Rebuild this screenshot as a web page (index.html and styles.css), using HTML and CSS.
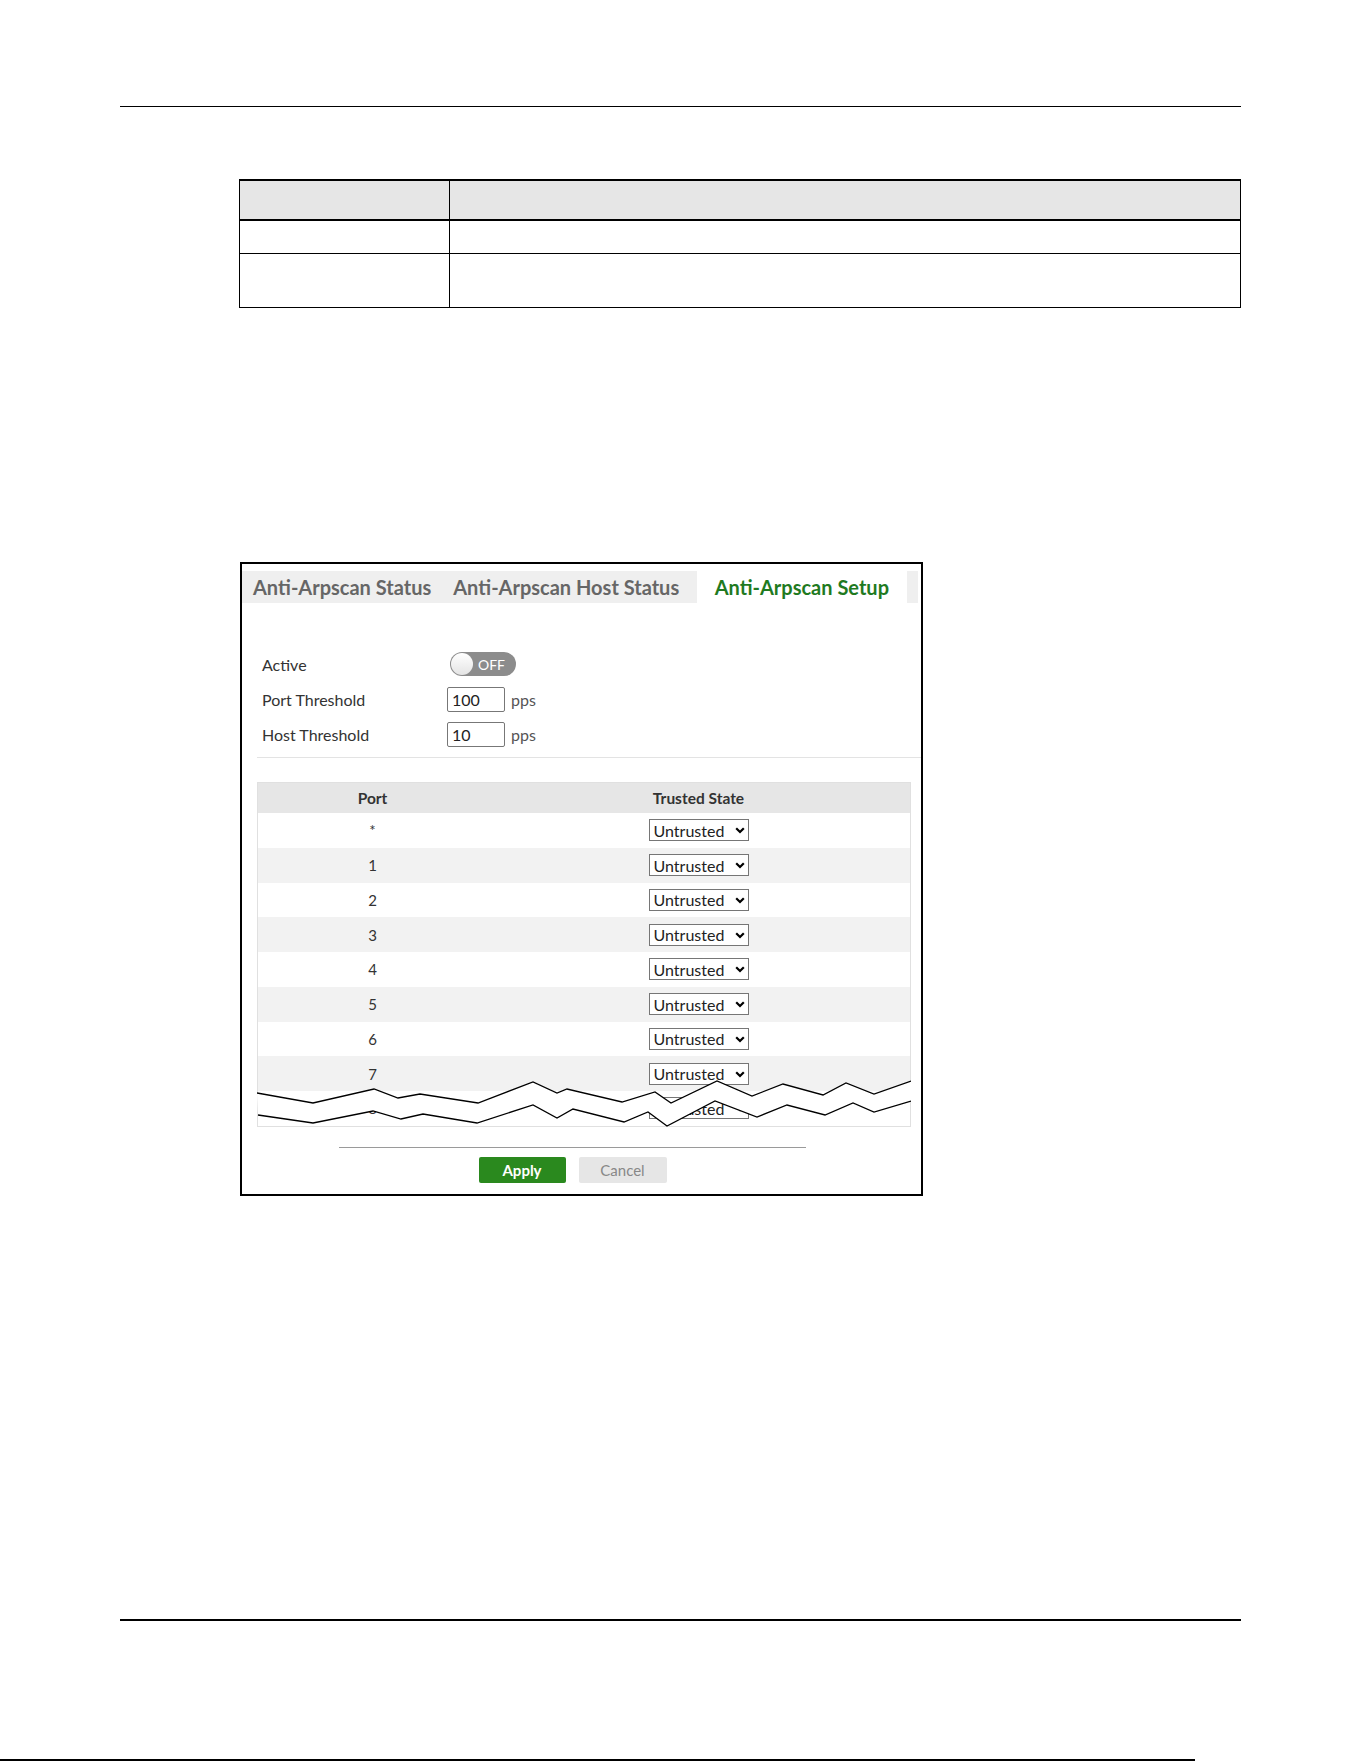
FILE: index.html
```html
<!DOCTYPE html>
<html lang="en">
<head>
  <meta charset="UTF-8">
  <title>Anti-Arpscan Setup</title>
  <link rel="stylesheet" href="styles.css">
</head>
<body>
  <div class="pagina">
    <div class="regua regua-topo"></div>

    <table class="tabela-doc">
      <thead>
        <tr><th class="col-rotulo"></th><th></th></tr>
      </thead>
      <tbody>
        <tr class="linha-curta"><td></td><td></td></tr>
        <tr class="linha-alta"><td></td><td></td></tr>
      </tbody>
    </table>

    <div class="tela">
      <div class="abas">
        <div class="aba">Anti-Arpscan Status</div>
        <div class="aba">Anti-Arpscan Host Status</div>
        <div class="aba ativa">Anti-Arpscan Setup</div>
      </div>

      <div class="ajustes">
        <div class="campo">
          <label>Active</label>
          <div class="chave"><span class="bolinha"></span><span class="chave-txt">OFF</span></div>
        </div>
        <div class="campo">
          <label for="porta-limite">Port Threshold</label>
          <input type="text" id="porta-limite" value="100">
          <span class="unidade">pps</span>
        </div>
        <div class="campo">
          <label for="host-limite">Host Threshold</label>
          <input type="text" id="host-limite" value="10">
          <span class="unidade">pps</span>
        </div>
      </div>

      <div class="divisor"></div>

      <table class="portas">
        <thead>
          <tr><th class="col-porta">Port</th><th>Trusted State</th></tr>
        </thead>
        <tbody id="lista-portas"></tbody>
      </table>

      <!-- corte da lista -->
      <svg class="corte" width="654" height="55" viewBox="0 0 654 55">
        <polygon fill="#fff" points="0,18 56,28 117,14 141,23 163,19 221,28 276,7 300,18 310,14 365,27 398,17 414,28 460,6 495,21 526,9 566,20 589,8 617,19 654,6 654,26 617,37 596,28 568,40 530,30 500,42 458,26 410,51 391,37 367,47 316,34 300,43 276,30 220,48 166,39 144,44 116,36 56,48 1,40"/>
        <polyline fill="none" stroke="#000" stroke-width="1.3" points="0,18 56,28 117,14 141,23 163,19 221,28 276,7 300,18 310,14 365,27 398,17 414,28 460,6 495,21 526,9 566,20 589,8 617,19 654,6"/>
        <polyline fill="none" stroke="#000" stroke-width="1.3" points="1,40 56,48 116,36 144,44 166,39 220,48 276,30 300,43 316,34 367,47 391,37 410,51 458,26 500,42 530,30 568,40 596,28 617,37 654,26"/>
      </svg>

      <div class="linha-botoes"></div>
      <div class="botoes">
        <button class="botao aplicar">Apply</button>
        <button class="botao cancelar">Cancel</button>
      </div>
    </div>

    <div class="regua regua-base"></div>
  </div>
  <div class="borda-final"></div>

  <script>
    const portas = ["*", "1", "2", "3", "4", "5", "6", "7", "8"];
    const corpo = document.getElementById("lista-portas");

    portas.forEach(function (p) {
      const tr = document.createElement("tr");
      tr.innerHTML =
        '<td>' + p + '</td>' +
        '<td><span class="caixa-sel">' +
        '<select><option>Untrusted</option><option>Trusted</option></select>' +
        '<svg class="seta" width="10" height="7" viewBox="0 0 10 7"><path d="M1.2 1.2 L5 5 L8.8 1.2" fill="none" stroke="#000" stroke-width="2.2"/></svg>' +
        '</span></td>';
      corpo.appendChild(tr);
    });
  </script>
</body>
</html>
```

FILE: styles.css
```css
body {
  margin: 0;
  background: #fff;
  font-family: 'Liberation Sans', Arial, sans-serif;
}

.pagina {
  width: 1121px;
  margin-left: 120px;
  padding-top: 106px;
}

.regua-topo {
  border-top: 1px solid #000;
}

.regua-base {
  margin-top: 423px;
  border-top: 2px solid #000;
}

.borda-final {
  margin-top: 138px;
  width: 1195px;
  height: 2px;
  background: #000;
}

/* tabela do manual */
.tabela-doc {
  margin-top: 72px;
  margin-left: 119px;
  width: 1002px;
  border-collapse: separate;
  border-spacing: 0;
  border-right: 1px solid #000;
  border-bottom: 1px solid #000;
}

.tabela-doc th,
.tabela-doc td {
  padding: 0;
  border-left: 1px solid #000;
  border-top: 1px solid #000;
  box-sizing: border-box;
}

.tabela-doc th {
  background: #e6e6e6;
  border-top-width: 2px;
  height: 40px;
}

.tabela-doc .col-rotulo {
  width: 210px;
}

.tabela-doc .linha-curta td {
  border-top-width: 2px;
  height: 34px;
}

.tabela-doc .linha-alta td {
  height: 54px;
}

/* captura da tela */
.tela {
  position: relative;
  margin-top: 254px;
  margin-left: 120px;
  width: 683px;
  height: 634px;
  box-sizing: border-box;
  border: 2px solid #000;
  font-family: 'Lato', sans-serif;
}

.abas {
  display: flex;
  height: 32px;
  margin: 7px 3px 0 0;
  background: #efefef;
}

.aba {
  padding: 0 11px;
  line-height: 33px;
  font-size: 20px;
  font-weight: 700;
  color: #666;
  white-space: nowrap;
}

.aba.ativa {
  margin-left: auto;
  margin-right: 11px;
  padding: 0 18px;
  background: #fff;
  color: #1f7a1f;
}

.ajustes {
  display: flex;
  flex-direction: column;
  gap: 9px;
  padding: 48px 0 0 20px;
}

.campo {
  display: flex;
  align-items: center;
  height: 26px;
}

.campo label {
  width: 185px;
  font-size: 16px;
  color: #333;
}

.chave {
  display: flex;
  align-items: center;
  width: 66px;
  height: 24px;
  margin-left: 3px;
  border-radius: 12px;
  background: #8c8c8c;
}

.bolinha {
  width: 22px;
  height: 22px;
  margin-left: 1px;
  border-radius: 50%;
  background: linear-gradient(#fff, #e4e4e4);
}

.chave-txt {
  margin-left: 5px;
  font-size: 14px;
  color: #fff;
}

.campo input {
  width: 58px;
  height: 25px;
  box-sizing: border-box;
  padding: 0 4px;
  border: 1px solid #777;
  border-radius: 2px;
  font-family: 'Lato', sans-serif;
  font-size: 16px;
  color: #222;
}

.unidade {
  margin-left: 6px;
  font-size: 16px;
  color: #555;
}

.divisor {
  margin: 10px 0 0 15px;
  border-top: 1px solid #e3e3e3;
}

/* lista de portas */
.portas {
  margin: 24px 0 0 15px;
  width: 654px;
  border-collapse: collapse;
  border: 1px solid #e0e0e0;
}

.portas th {
  height: 30px;
  padding: 0;
  background: #e6e6e6;
  font-size: 15.5px;
  font-weight: 700;
  color: #333;
}

.portas .col-porta {
  width: 229px;
}

.portas td {
  height: 34.75px;
  padding: 0;
  text-align: center;
  font-size: 15px;
  color: #333;
}

.portas tbody tr:nth-child(even) {
  background: #f2f2f2;
}

.caixa-sel {
  position: relative;
  display: inline-block;
  vertical-align: middle;
}

.caixa-sel select {
  display: block;
  width: 100px;
  height: 22px;
  padding: 0 4px;
  border: 1px solid #767676;
  border-radius: 0;
  background: #fff;
  -webkit-appearance: none;
  appearance: none;
  font-family: 'Lato', sans-serif;
  font-size: 16px;
  color: #222;
}

.seta {
  position: absolute;
  right: 4px;
  top: 8px;
  pointer-events: none;
}

.corte {
  position: absolute;
  left: 15px;
  top: 511px;
}

.linha-botoes {
  margin: 20px 0 0 97px;
  width: 467px;
  border-top: 1px solid #9a9a9a;
}

.botoes {
  display: flex;
  justify-content: center;
  gap: 13px;
  width: 467px;
  margin: 9px 0 0 97px;
}

.botao {
  width: 87px;
  height: 26px;
  border: none;
  border-radius: 2px;
  font-family: 'Lato', sans-serif;
  font-size: 15px;
}

.aplicar {
  background: #2a891e;
  color: #fff;
  font-weight: 700;
}

.cancelar {
  width: 88px;
  background: #e6e6e6;
  color: #888;
}
```
